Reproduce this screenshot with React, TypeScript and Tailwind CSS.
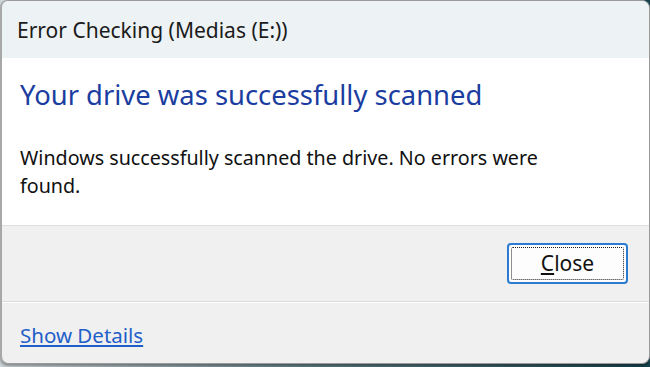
import React from "react";

export default function App() {
    return (
        <div className="w-[650px] h-[367px] overflow-hidden bg-gradient-to-r from-[#cfd6da] via-[#5d7a82] to-[#16434d]" style={{ fontFamily: '"Noto Sans", "Open Sans", sans-serif' }}>
            <div className="w-[650px] h-[364px] flex flex-col rounded-[8px] border border-[#9a9a9a] border-l-2 border-l-[#a8a8a8] overflow-hidden bg-[#f0f0f0] shadow-[0_2px_3px_rgba(0,0,0,0.35)]">
                {/* title bar */}
                <div className="h-[57px] shrink-0 bg-[#edf2f5] flex items-center pl-[15px] pt-[3px]">
                    <span className="text-[21px] text-[#1b1b1b]">Error Checking (Medias (E:))</span>
                </div>

                {/* content */}
                <div className="h-[168px] shrink-0 bg-white px-[18px] pt-[21px] border-b border-[#dfdfdf]">
                    <div className="text-[27.4px] leading-[32px] text-[#1b3d9f]">Your drive was successfully scanned</div>
                    <div className="mt-[33px] text-[19.7px] leading-[28px] text-[#111] w-[540px]">
                        Windows successfully scanned the drive. No errors were found.
                    </div>
                </div>

                {/* buttons */}
                <div className="h-[76px] shrink-0 flex items-center justify-end pr-[21px] border-b border-[#dcdcdc]">
                    <button className="w-[121px] h-[41px] rounded-[4px] border-2 border-[#2b7bd0] bg-[#fdfdfd] p-[2px]">
                        <div className="w-full h-full border border-dotted border-[#222] rounded-[2px] flex items-center justify-center text-[21px] text-[#111]">
                            <span><span className="underline underline-offset-2">C</span>lose</span>
                        </div>
                    </button>
                </div>

                {/* footer */}
                <div className="flex-1 border-t border-white flex items-center pl-[18px] pt-[4px]">
                    <a href="#" className="text-[20.5px] text-[#1f5fc9] underline underline-offset-2">Show Details</a>
                </div>
            </div>
        </div>
    );
}
